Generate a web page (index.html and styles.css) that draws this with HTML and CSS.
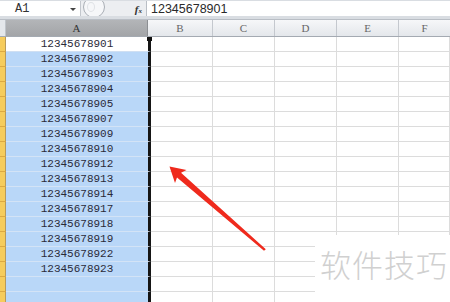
FILE: index.html
```html
<!DOCTYPE html>
<html>
<head>
<meta charset="utf-8">
<link rel="stylesheet" href="styles.css">
</head>
<body>
<div class="sheet">
  <div class="fbar">
    <div class="namebox"><span class="name">A1</span><span class="dd"></span></div>
    <div class="tools"><span class="round"><span class="dot"></span></span><span class="fx">f<span class="sub">x</span></span></div>
    <div class="finput">12345678901</div>
  </div>
  <div class="hdr">
    <div class="corner"></div>
    <div class="ch sel">A</div>
    <div class="ch">B</div>
    <div class="ch">C</div>
    <div class="ch">D</div>
    <div class="ch">E</div>
    <div class="ch last">F</div>
  </div>
  <div class="rows">
    <div class="row"><i class="rh"></i><div class="a active">12345678901</div><i></i><i></i><i></i><i></i><i></i></div>
    <div class="row"><i class="rh"></i><div class="a">12345678902</div><i></i><i></i><i></i><i></i><i></i></div>
    <div class="row"><i class="rh"></i><div class="a">12345678903</div><i></i><i></i><i></i><i></i><i></i></div>
    <div class="row"><i class="rh"></i><div class="a">12345678904</div><i></i><i></i><i></i><i></i><i></i></div>
    <div class="row"><i class="rh"></i><div class="a">12345678905</div><i></i><i></i><i></i><i></i><i></i></div>
    <div class="row"><i class="rh"></i><div class="a">12345678907</div><i></i><i></i><i></i><i></i><i></i></div>
    <div class="row"><i class="rh"></i><div class="a">12345678909</div><i></i><i></i><i></i><i></i><i></i></div>
    <div class="row"><i class="rh"></i><div class="a">12345678910</div><i></i><i></i><i></i><i></i><i></i></div>
    <div class="row"><i class="rh"></i><div class="a">12345678912</div><i></i><i></i><i></i><i></i><i></i></div>
    <div class="row"><i class="rh"></i><div class="a">12345678913</div><i></i><i></i><i></i><i></i><i></i></div>
    <div class="row"><i class="rh"></i><div class="a">12345678914</div><i></i><i></i><i></i><i></i><i></i></div>
    <div class="row"><i class="rh"></i><div class="a">12345678917</div><i></i><i></i><i></i><i></i><i></i></div>
    <div class="row"><i class="rh"></i><div class="a">12345678918</div><i></i><i></i><i></i><i></i><i></i></div>
    <div class="row"><i class="rh"></i><div class="a">12345678919</div><i></i><i></i><i></i><i></i><i></i></div>
    <div class="row"><i class="rh"></i><div class="a">12345678922</div><i></i><i></i><i></i><i></i><i></i></div>
    <div class="row"><i class="rh"></i><div class="a">12345678923</div><i></i><i></i><i></i><i></i><i></i></div>
    <div class="row"><i class="rh"></i><div class="a"></div><i></i><i></i><i></i><i></i><i></i></div>
    <div class="row"><i class="rh"></i><div class="a"></div><i></i><i></i><i></i><i></i><i></i></div>
  </div>
  <svg class="arrow" width="450" height="302" viewBox="0 0 450 302">
    <polygon points="169.5,166.5 186.5,170 181,172.8 265.8,249.2 264,250.8 177,177.4 175,183" fill="#ef2a1d"/>
  </svg>
  <div class="wm">软件技巧</div>
</div>
</body>
</html>
```

FILE: styles.css
```css
html, body {
  margin: 0;
  padding: 0;
  background: #ffffff;
}
.sheet {
  position: relative;
  width: 450px;
  height: 302px;
  overflow: hidden;
  font-family: "Liberation Sans", sans-serif;
}
.fbar {
  display: flex;
  height: 20px;
  box-sizing: border-box;
  padding: 1px 0 3px 0;
  background: #d9dde2;
  border-bottom: 1px solid #b9bec5;
}
.namebox {
  width: 81px;
  box-sizing: border-box;
  background: #ffffff;
  border-right: 1px solid #c3c7cd;
  display: flex;
  align-items: center;
  justify-content: space-between;
  padding: 0 4px 0 15px;
}
.name {
  font-family: "Liberation Mono", monospace;
  font-size: 12px;
  color: #333;
}
.dd {
  width: 0;
  height: 0;
  border-left: 3px solid transparent;
  border-right: 3px solid transparent;
  border-top: 3px solid #444;
  margin-top: 1px;
}
.tools {
  width: 65px;
  display: flex;
  align-items: center;
  justify-content: space-between;
  padding: 0 4px 0 2px;
  box-sizing: border-box;
  background: #eceef1;
  overflow: hidden;
}
.round {
  width: 22px;
  height: 22px;
  margin-top: -3px;
  border-radius: 50%;
  border: 1px solid #a9aeb5;
  background: #f6f7f9;
  display: flex;
  align-items: center;
  padding-left: 3px;
  box-sizing: border-box;
}
.dot {
  width: 6px;
  height: 8px;
  border-radius: 50%;
  border: 1px solid #dfe2e6;
}
.fx {
  font-family: "Liberation Serif", serif;
  font-style: italic;
  font-weight: bold;
  font-size: 11px;
  color: #333;
}
.sub {
  font-size: 7px;
}
.finput {
  flex: 1;
  background: #ffffff;
  border-left: 1px solid #b9bec5;
  padding-left: 4px;
  font-size: 12.5px;
  line-height: 16px;
  color: #2a2a2a;
}
.hdr {
  display: grid;
  grid-template-columns: 6px 142px 65px 62px 62px 62px 51px;
  height: 17px;
  box-sizing: border-box;
  border-bottom: 1px solid #a4aab2;
}
.corner {
  background: #e4e7eb;
  border-right: 1px solid #bfc4ca;
}
.ch {
  display: flex;
  align-items: center;
  justify-content: center;
  font-family: "Liberation Serif", serif;
  font-size: 11px;
  color: #666;
  background: linear-gradient(#f6f7f9, #e4e7eb);
  border-right: 1px solid #c4c8ce;
}
.ch.sel {
  background: linear-gradient(#b3b5b8, #a3a5a8);
  color: #333;
  border-right: 1px solid #8c8f93;
}
.ch.last {
  border-right: none;
}
.rows {
  display: flex;
  flex-direction: column;
}
.row {
  display: grid;
  grid-template-columns: 6px 145px 62px 62px 62px 62px 51px;
  height: 15px;
}
.row i {
  display: block;
  box-sizing: border-box;
  border-bottom: 1px solid #dcdcdc;
  border-right: 1px solid #dcdcdc;
}
.row .rh {
  background: #f6cc5c;
  border-bottom: 1px solid #dca842;
  border-right: 1px solid #b89a5a;
}
.a {
  box-sizing: border-box;
  background: #b9d7f8;
  border-bottom: 1px solid #d3e3f6;
  border-right: 3px solid #151515;
  font-family: "Liberation Mono", monospace;
  font-size: 11px;
  line-height: 14px;
  text-align: center;
  color: #2a2a38;
}
.a.active {
  background: #ffffff;
  border-bottom: 1px solid #cfdff2;
  position: relative;
}
.a.active::after {
  content: "";
  position: absolute;
  right: -4px;
  top: 0;
  width: 5px;
  height: 4px;
  background: #111;
}
.arrow {
  position: absolute;
  left: 0;
  top: 0;
}
.wm {
  position: absolute;
  left: 315px;
  top: 235px;
  width: 135px;
  height: 67px;
  background: #ffffff;
  box-sizing: border-box;
  padding: 9px 0 0 5px;
  font-family: "Noto Sans CJK SC", sans-serif;
  font-weight: 300;
  font-size: 31px;
  line-height: 40px;
  letter-spacing: 1px;
  color: #d0d0d0;
}
```
